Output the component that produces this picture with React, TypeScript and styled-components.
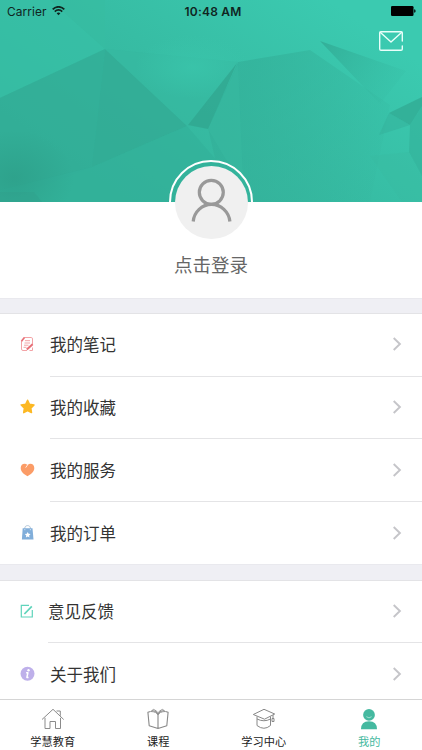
import React from 'react';
import styled, { createGlobalStyle } from 'styled-components';

const Global = createGlobalStyle`
  * { box-sizing: border-box; }
  body { margin: 0; background: #fff; }
`;

const Screen = styled.div`
  width: 422px;
  height: 750px;
  display: flex;
  flex-direction: column;
  overflow: hidden;
  background: #fff;
  color: #333;
  font-family: Inter, "Noto Sans CJK SC", sans-serif;
`;

const Hero = styled.header`
  position: relative;
  flex: none;
  height: 202px;
  background: #36b59c;
`;

const Facets = styled.svg`
  position: absolute;
  inset: 0;
`;

const StatusBar = styled.div`
  position: relative;
  height: 22px;
  display: grid;
  grid-template-columns: 1fr auto 1fr;
  align-items: center;
  padding: 0 6px 0 7px;
  font-size: 11.9px;
  color: #10251f;
`;

const Carrier = styled.div`
  display: flex;
  align-items: center;
  gap: 5px;
  letter-spacing: 0.1px;
`;

const Clock = styled.div`
  font-weight: 600;
  font-size: 12px;
  letter-spacing: 0.2px;
  padding-left: 3px;
`;

const Battery = styled.svg`
  justify-self: end;
`;

const HeroActions = styled.div`
  position: relative;
  display: flex;
  justify-content: flex-end;
  padding: 8px 18px 0 0;
`;

const Profile = styled.section`
  position: relative;
  flex: none;
  height: 96px;
  display: flex;
  flex-direction: column;
  align-items: center;
`;

const AvatarRing = styled.div`
  flex: none;
  width: 84px;
  height: 84px;
  margin-top: -42px;
  border: 2px solid #fff;
  border-radius: 50%;
  display: flex;
  align-items: center;
  justify-content: center;
`;

const Avatar = styled.div`
  width: 73px;
  height: 73px;
  border-radius: 50%;
  background: #f0f0f0;
`;

const LoginLabel = styled.div`
  margin-top: 8px;
  font-size: 18.5px;
  line-height: 26px;
  color: #666;
`;

const Gap = styled.div<{ $h: number }>`
  flex: none;
  height: ${p => p.$h}px;
  background: #efeff4;
  border-top: 1px solid #e9e9ee;
  border-bottom: 1px solid #e3e3e6;
`;

const Menu = styled.div`
  flex: none;
`;

const Row = styled.div<{ $h: number }>`
  height: ${p => p.$h}px;
  display: flex;
  align-items: stretch;
  padding-left: 19px;
`;

const IconCell = styled.div<{ $lift: number }>`
  width: 31px;
  display: flex;
  align-items: center;
  padding-bottom: ${p => p.$lift + 1}px;
`;

const RowBody = styled.div<{ $line?: boolean; $shift?: number; $lift: number }>`
  flex: 1;
  display: flex;
  align-items: center;
  justify-content: space-between;
  padding: 0 20px ${p => p.$lift}px 0;
  margin-left: ${p => p.$shift ?? 0}px;
  font-size: 16.5px;
  border-bottom: 1px solid ${p => (p.$line ? '#e4e4e6' : 'transparent')};
`;

const TabBar = styled.nav`
  flex: none;
  height: 51px;
  display: grid;
  grid-template-columns: repeat(4, 1fr);
  position: relative;
  background: #fff;
  border-top: 1px solid #d5d5d5;
`;

const Tab = styled.div<{ $active?: boolean }>`
  display: flex;
  flex-direction: column;
  align-items: center;
  padding-top: 7px;
  font-size: 11.2px;
  line-height: 16px;
  color: ${p => (p.$active ? '#45b9a0' : '#222')};
  svg { margin-bottom: 3px; }
`;

const Content = styled.main`
  flex: 1;
  min-height: 0;
`;

const HeroFacets = () => (
  <Facets width="422" height="202" viewBox="0 0 422 202">
    <defs>
      <linearGradient id="base" gradientUnits="userSpaceOnUse" x1="330" y1="0" x2="170" y2="230">
        <stop offset="0" stopColor="#3bcab0" />
        <stop offset="0.5" stopColor="#37bda4" />
        <stop offset="1" stopColor="#33b199" />
      </linearGradient>
      <linearGradient id="fade" gradientUnits="userSpaceOnUse" x1="250" y1="60" x2="400" y2="110">
        <stop offset="0" stopColor="#33b099" stopOpacity="0.7" />
        <stop offset="1" stopColor="#33b099" stopOpacity="0.1" />
      </linearGradient>
      <linearGradient id="sliver" gradientUnits="userSpaceOnUse" x1="320" y1="41" x2="390" y2="95">
        <stop offset="0" stopColor="#31a993" stopOpacity="0.8" />
        <stop offset="1" stopColor="#35b8a0" stopOpacity="0.15" />
      </linearGradient>
      <radialGradient id="glow">
        <stop offset="0" stopColor="#3ac5ab" stopOpacity="0.8" />
        <stop offset="1" stopColor="#3ac5ab" stopOpacity="0" />
      </radialGradient>
      <radialGradient id="shade">
        <stop offset="0" stopColor="#2c9c86" stopOpacity="0.65" />
        <stop offset="1" stopColor="#2c9c86" stopOpacity="0" />
      </radialGradient>
    </defs>
    <path d="M0 0H422V202H0z" fill="url(#base)" />
    <path d="M0 0H50L105 49L0 98z" fill="#38c1a7" opacity=".7" />
    <path d="M50 0H105V49z" fill="#37bca2" opacity=".6" />
    <path d="M0 98L105 49L92 167L0 202z" fill="#33ae97" opacity=".75" />
    <path d="M105 49L187 126L92 167z" fill="#32ab95" opacity=".85" />
    <path d="M105 49L238 62L188 126z" fill="#36b8a0" opacity=".5" />
    <ellipse cx="193" cy="67" rx="58" ry="32" fill="url(#glow)" />
    <path d="M0 202V190L92 167L187 126L225 170V202z" fill="#33b19a" opacity=".65" />
    <path d="M238 62L310 50L390 105L370 202H225L208 128z" fill="url(#fade)" />
    <path d="M237 63L188 125L208 129z" fill="#31a690" opacity=".8" />
    <path d="M238 64L208 129L225 158L243 180z" fill="#39bba3" opacity=".4" />
    <path d="M320 41L406 71L380 104z" fill="url(#sliver)" />
    <path d="M422 97L389 113L410 125L422 106z" fill="#32a993" opacity=".75" />
    <path d="M389 113L410 125L379 135z" fill="#34b09a" opacity=".5" />
    <path d="M410 125L422 106V176L409 152z" fill="#33ae98" opacity=".55" />
    <path d="M370 156L409 152L422 176V202H402z" fill="#38b9a1" opacity=".35" />
    <ellipse cx="14" cy="178" rx="60" ry="48" fill="url(#shade)" />
    <path d="M0 192H34L42 202H0z" fill="#319e89" opacity=".35" />
  </Facets>
);

const Wifi = () => (
  <svg width="13" height="10" viewBox="0 0 13 10" fill="none" stroke="#10251f" strokeWidth="1.7">
    <path d="M.7 3.4C4-.1 9-.1 12.3 3.4" />
    <path d="M2.8 5.6c2.1-2.2 5.3-2.2 7.4 0" />
    <path d="M6.5 9.3L4.6 7.3c1.1-1 2.7-1 3.8 0z" fill="#10251f" stroke="none" />
  </svg>
);

const Mail = () => (
  <svg width="26" height="22" viewBox="0 0 26 22" fill="none" stroke="#e9fffa" strokeWidth="1.4" strokeLinecap="round" strokeLinejoin="round">
    <path d="M24.3 11V3q0-1.3-1.3-1.3H3Q1.7 1.7 1.7 3v16q0 1.3 1.3 1.3h20q1.3 0 1.3-1.3v-3" />
    <path d="M2.2 2.2L13 12L23.8 2.2" />
  </svg>
);

const Person = () => (
  <svg width="73" height="73" viewBox="0 0 73 73" fill="none" stroke="#999" strokeWidth="3.2">
    <circle cx="36.3" cy="26.3" r="12" />
    <path d="M18.2 55.500C19 46 27 38.300 36.500 38.300S54 46 54.900 55.500" />
  </svg>
);

const Note = () => (
  <svg width="16" height="16" viewBox="0 0 16 16" fill="none" stroke="#f3a3a6" strokeWidth="1">
    <path d="M5 1.500H12.300Q13.500 1.500 13.500 3V9M2.500 5V13Q2.500 14.500 4 14.500H8" />
    <path d="M2.500 5.300L5.400 1.500" stroke="#e77078" strokeWidth="1.700" />
    <path d="M6 4.700H11M5.500 7H11M5 9.200H9.500M4.500 11.300H7.500" />
    <path d="M7.800 13.600L13.600 8.200" stroke="#e77078" strokeWidth="2.100" />
    <path d="M10.500 14.500h3v-3" />
  </svg>
);

const Star = () => (
  <svg width="17" height="17" viewBox="0 0 17 17">
    <path d="M8.600 2.200L10.500 6.300L15 6.900L11.800 10.100L12.500 14.600L8.600 12.500L4.700 14.600L5.400 10.100L2.200 6.900L6.700 6.300z" fill="#fcb823" stroke="#fcb823" strokeWidth="1.500" strokeLinejoin="round" />
  </svg>
);

const Heart = () => (
  <svg width="17" height="17" viewBox="0 0 17 17">
    <path d="M8.500 4C6 1.600 1.700 2.700 1.700 7.100C1.700 11 5.500 13.700 8.500 15.200C11.500 13.700 15.300 11 15.300 7.100C15.300 2.700 11 1.600 8.500 4z" fill="#fb9c67" />
    <path d="M6.900 6.300L8.600 3.900" stroke="#fff" strokeWidth=".8" strokeLinecap="round" />
  </svg>
);

const Bag = () => (
  <svg width="17" height="17" viewBox="0 0 17 17">
    <path d="M5.800 5V4C6 .800 11.200.800 11.400 4V5" fill="none" stroke="#a9bfd4" strokeWidth=".9" />
    <path d="M3.700 4.300H13.500L14.500 15.600H2.900z" fill="#81aeda" />
    <path d="M8.700 8l.9 1.800 2 .2-1.500 1.400.4 2-1.800-1-1.800 1 .4-2-1.500-1.400 2-.2z" fill="#fff" />
    <path d="M5.800 5.200v1M11.400 5.200v1" stroke="#e6eff8" strokeWidth=".9" />
  </svg>
);

const Edit = () => (
  <svg width="16" height="16" viewBox="0 0 16 16" fill="none" stroke="#5fd4bb" strokeWidth="1.200">
    <path d="M10 2.300H2.300V14H13.300V7" />
    <path d="M5.400 11L12.800 3.300" strokeWidth="1.700" />
  </svg>
);

const Info = () => (
  <svg width="17" height="17" viewBox="0 0 17 17">
    <circle cx="8.500" cy="8.800" r="7" fill="#beb0ea" />
    <circle cx="9.500" cy="5.200" r="1.200" fill="#fff" />
    <path d="M7.100 7.700H8.900L7.900 12.500H9.500" fill="none" stroke="#fff" strokeWidth="1.500" strokeLinejoin="round" />
  </svg>
);

const Chevron = () => (
  <svg width="10" height="16" viewBox="0 0 10 16" fill="none" stroke="#c5c5c9" strokeWidth="1.900">
    <path d="M1.700 2L7.900 8L1.700 14" />
  </svg>
);

const Home = () => (
  <svg width="24" height="24" viewBox="0 0 24 24" fill="none" stroke="#8b8b8b" strokeWidth="1">
    <path d="M1 12.500L12 2.300L22.700 12.500" />
    <path d="M4 10.800V21.500H9V14.500H14.500V21.500H19.500V10.800M15.500 4H19.300V8.800" />
  </svg>
);

const Book = () => (
  <svg width="24" height="24" viewBox="0 0 24 24" fill="none" stroke="#888" strokeWidth="1.100" strokeLinejoin="round">
    <path d="M4.500 4.500L1.900 5.300L3.200 18.800L12 21.500L20.800 18.800L22.100 5.300L19.500 4.500M12 8V21.500" />
    <path d="M4.500 4.500Q10.500 4.500 12 8Q13.500 4.500 19.500 4.500M5 4.300L7.500 2.400Q11.300 3.300 12 7Q12.700 3.300 16.500 2.400L19 4.300M6.300 3.400Q10.800 4 12 7.500Q13.200 4 17.700 3.400" strokeWidth=".9" />
  </svg>
);

const Cap = () => (
  <svg width="24" height="24" viewBox="0 0 24 24" fill="none" stroke="#888" strokeWidth="1" strokeLinejoin="round">
    <path d="M1.300 7.500L12 2.300L22.700 7L12.500 12.200z" />
    <path d="M5 9.500V18.500Q12 24 18.500 18.500V9.500M5 12Q12 15.500 18.500 12" />
    <path d="M21 8V11.500M20 11.500h2v3h-2z" />
  </svg>
);

const Me = () => (
  <svg width="24" height="24" viewBox="0 0 24 24">
    <circle cx="12" cy="7.900" r="5.900" fill="#45b9a0" />
    <path d="M4 22.200Q4 14.200 12 14.200T20 22.200z" fill="#45b9a0" />
    <path d="M9.400 9.700Q12 12 14.600 9.700" fill="none" stroke="#b9e9dd" strokeWidth=".8" />
  </svg>
);

type Item = {
  label: string;
  Icon: () => React.ReactElement;
  height: number;
  lift: number;
  shift?: number;
};

const personal: Item[] = [
  { label: '我的笔记', Icon: Note, height: 63, lift: 3 },
  { label: '我的收藏', Icon: Star, height: 62, lift: 2 },
  { label: '我的服务', Icon: Heart, height: 63, lift: 1 },
  { label: '我的订单', Icon: Bag, height: 62, lift: 0 },
];

const support: Item[] = [
  { label: '意见反馈', Icon: Edit, height: 62, lift: 2, shift: -2 },
  { label: '关于我们', Icon: Info, height: 63, lift: 1 },
];

const tabs = [
  { label: '学慧教育', Icon: Home },
  { label: '课程', Icon: Book },
  { label: '学习中心', Icon: Cap },
  { label: '我的', Icon: Me, active: true },
];

const MenuList = ({ items }: { items: Item[] }) => (
  <Menu>
    {items.map(({ label, Icon, height, lift, shift }, i) => (
      <Row key={label} $h={height}>
        <IconCell $lift={lift}><Icon /></IconCell>
        <RowBody $line={i < items.length - 1} $shift={shift} $lift={lift}>
          <span>{label}</span>
          <Chevron />
        </RowBody>
      </Row>
    ))}
  </Menu>
);

export default function App() {
  return (
    <Screen>
      <Global />
      <Hero>
        <HeroFacets />
        <StatusBar>
          <Carrier>Carrier <Wifi /></Carrier>
          <Clock>10:48 AM</Clock>
          <Battery width="26" height="10" viewBox="0 0 26 10">
            <rect x="1" y="0" width="22.500" height="10" rx="1.300" />
            <path d="M24.200 3.300Q25.600 3.500 25.600 5T24.200 6.700z" />
          </Battery>
        </StatusBar>
        <HeroActions><Mail /></HeroActions>
      </Hero>
      <Content>
        <Profile>
          <AvatarRing><Avatar><Person /></Avatar></AvatarRing>
          <LoginLabel>点击登录</LoginLabel>
        </Profile>
        <Gap $h={16} />
        <MenuList items={personal} />
        <Gap $h={17} />
        <MenuList items={support} />
      </Content>
      <TabBar>
        {tabs.map(({ label, Icon, active }) => (
          <Tab key={label} $active={active}><Icon />{label}</Tab>
        ))}
      </TabBar>
    </Screen>
  );
}
